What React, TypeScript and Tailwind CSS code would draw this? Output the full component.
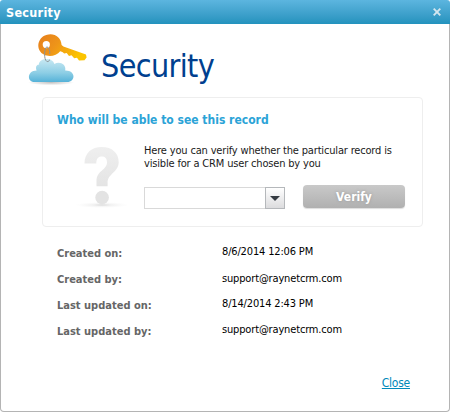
const KeyCloudIcon = () => {
  return (
    <svg width="66" height="58" viewBox="0 0 66 58" className="shrink-0">
      <defs>
        <linearGradient id="key" x1="0" y1="0" x2="1" y2="0.4">
          <stop offset="0" stopColor="#e67e1c" />
          <stop offset="0.45" stopColor="#ee9419" />
          <stop offset="1" stopColor="#fbc400" />
        </linearGradient>
        <linearGradient id="cloud" x1="0" y1="0" x2="0" y2="1">
          <stop offset="0" stopColor="#c9e9f3" />
          <stop offset="0.6" stopColor="#8dcee5" />
          <stop offset="1" stopColor="#55b2d8" />
        </linearGradient>
        <radialGradient id="cloudShadow">
          <stop offset="0" stopColor="#999" stopOpacity="0.6" />
          <stop offset="1" stopColor="#999" stopOpacity="0" />
        </radialGradient>
      </defs>
      <ellipse cx="30" cy="50.5" rx="23" ry="2.8" fill="url(#cloudShadow)" />
      <path
        d="M13.5 50 C5.8 50 5.8 38.4 15.6 38.4 C14.2 35 15.6 32.6 17.8 32.8 C18 25.4 31.6 24.8 33.4 32 C38 28.8 45.6 31.8 44.2 38.5 C55 38.2 55 50 46 50 Z"
        fill="url(#cloud)"
      />
      <path
        fillRule="evenodd"
        d="M29.4 2.2 C20 2.4 14.8 11 18.6 18.6 C22.6 26 34.6 25.4 39.2 19.3 L41.4 20 L43.2 21.5 L45.7 21 L48 24 L50.5 23.2 L53.2 26.2 L56 25.7 L58 28.4 L63.5 28.3 L65.6 25.5 L65 22.6 L42.4 14.6 L40.6 13 C40.2 6.4 35.5 2.2 29.4 2.2 Z M25.3 9 A3.6 3.6 0 0 1 25.3 16.2 A3.6 3.6 0 0 1 25.3 9 Z"
        fill="url(#key)"
      />
      <path
        d="M25.8 14.8 C23 17 22.7 27.5 25.8 29.4 C27.2 30 28.4 29 28.6 27.6 M25.8 14.8 C28.2 15.5 29 19 28.7 22"
        fill="none"
        stroke="#8d9496"
        strokeWidth="1"
      />
    </svg>
  );
};

const QuestionIcon = () => {
  return (
    <svg width="56" height="66" viewBox="0 0 56 66" className="shrink-0">
      <defs>
        <linearGradient id="mark" x1="0" y1="0" x2="0" y2="1">
          <stop offset="0" stopColor="#efefef" />
          <stop offset="1" stopColor="#e4e4e4" />
        </linearGradient>
        <radialGradient id="markShadow">
          <stop offset="0" stopColor="#bbb" stopOpacity="0.6" />
          <stop offset="0.35" stopColor="#ddd" stopOpacity="0.4" />
          <stop offset="1" stopColor="#eee" stopOpacity="0" />
        </radialGradient>
      </defs>
      <ellipse cx="28" cy="61" rx="27" ry="3" fill="url(#markShadow)" />
      <path
        d="M10.5 19.5 C10.5 9 17.5 3 27.8 3 C38 3 44.7 9 44.7 18 C44.7 28.5 33.6 29.5 33.6 38.8 L33.6 42.3 L22.5 42.3 L22.5 37 C22.5 26.5 33 26 33 18.5 C33 14.5 31 12.6 27.8 12.6 C24 12.6 22.3 15 22.3 19.5 Z"
        fill="url(#mark)"
      />
      <circle cx="28.1" cy="53.5" r="6.8" fill="#e3e3e3" />
    </svg>
  );
};

const details = [
  { label: "Created on:", value: "8/6/2014 12:06 PM", offset: "pb-1" },
  { label: "Created by:", value: "support@raynetcrm.com", offset: "pb-0.5" },
  { label: "Last updated on:", value: "8/14/2014 2:43 PM", offset: "pb-1" },
  { label: "Last updated by:", value: "support@raynetcrm.com", offset: "pb-1" },
];

const App = () => {
  return (
    <div className="flex flex-col w-[450px] h-[412px] bg-white overflow-hidden whitespace-nowrap text-[11px] text-black font-['DejaVu_Sans_Condensed','DejaVu_Sans',sans-serif] [font-stretch:condensed]">
      <header className="flex h-6 shrink-0 items-center justify-between rounded-t-[3px] bg-linear-to-b from-[#5cb5df] to-[#2292bd] pl-[6px] pr-[9px]">
        <span className="pt-[2px] text-[12.5px] tracking-[0.3px] font-bold text-white">Security</span>
        <svg width="8" height="8" viewBox="0 0 8 8">
          <path d="M0.7 0.7 L7.3 7.3 M7.3 0.7 L0.7 7.3" stroke="#d3e6ef" strokeWidth="1.9" />
        </svg>
      </header>

      <main className="flex flex-1 flex-col rounded-b-[4px] border border-t-0 border-[#b4b4b4] pl-[41px] pr-[26px]">
        <div className="-ml-[21px] flex h-[73px] shrink-0 items-start gap-[14px] pt-2">
          <KeyCloudIcon />
          <h1 className="pt-[14px] text-[32px] leading-[40px] tracking-[-0.65px] text-[#003f8f]">
            Security
          </h1>
        </div>

        <section className="h-[130px] shrink-0 rounded-[4px] border border-[#eee] pl-[14px] pt-[14px]">
          <h2 className="text-xs leading-4 font-bold text-[#2ba3d7]">
            Who will be able to see this record
          </h2>
          <div className="flex pt-4 pl-[17px]">
            <QuestionIcon />
            <div className="pl-[14px]">
              <p className="leading-[13px] tracking-[-0.17px] text-[#1a1a1a]">
                Here you can verify whether the particular record is
                <br />
                visible for a CRM user chosen by you
              </p>
              <div className="flex items-start pt-[14px]">
                <div className="mt-[3px] flex h-[22px] w-[141px] border border-[#d9d9d9]">
                  <input className="w-[120px] outline-none" />
                  <button className="-my-px -mr-px flex w-5 items-center justify-center border border-[#b5b8bb] bg-linear-to-b from-white to-[#dcdcde]">
                    <svg width="10" height="5" viewBox="0 0 10 5">
                      <path d="M0 0 H10 L5 5 Z" fill="#353b42" />
                    </svg>
                  </button>
                </div>
                <button className="mt-px ml-[18px] h-[23px] w-[102px] rounded-[4px] bg-linear-to-b from-[#c9c9c9] to-[#b0b0b0] text-xs leading-none font-bold text-white shadow-[0_1px_1px_#ddd] [text-shadow:0_0_3px_#999]">
                  Verify
                </button>
              </div>
            </div>
          </div>
        </section>

        <dl className="pt-[14px] pl-[15px]">
          {details.map(({ label, value, offset }) => (
            <div key={label} className="flex h-[26px] items-center">
              <dt className="w-[165px] font-bold text-[#666]">{label}</dt>
              <dd className={`${offset} tracking-[-0.16px]`}>{value}</dd>
            </div>
          ))}
        </dl>

        <div className="flex justify-end pt-[30px] pr-[13px]">
          <a href="#" className="text-xs leading-4 tracking-[-0.25px] text-[#0089ba] underline">
            Close
          </a>
        </div>
      </main>
    </div>
  );
};

export default App;
